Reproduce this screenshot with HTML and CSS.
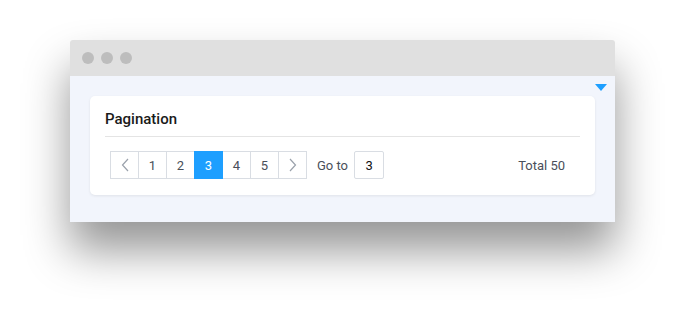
FILE: index.html
```html
<!DOCTYPE html>
<html lang="en">
<head>
  <meta charset="UTF-8">
  <meta name="viewport" content="width=device-width, initial-scale=1.0">
  <title>Pagination</title>
  <link rel="stylesheet" href="styles.css">
</head>
<body>
  <div class="window">
    <div class="titlebar">
      <span class="dot"></span>
      <span class="dot"></span>
      <span class="dot"></span>
    </div>
    <div class="content">
      <span class="toggle"></span>
      <div class="card">
        <div class="card-header">Pagination</div>
        <div class="card-body">
          <div class="pager">
            <a class="page arrow">
              <svg width="8" height="14" viewBox="0 0 8 14"><path d="M7 1L1.5 7L7 13" fill="none" stroke="currentColor" stroke-width="1.2"/></svg>
            </a>
            <a class="page">1</a>
            <a class="page">2</a>
            <a class="page active">3</a>
            <a class="page">4</a>
            <a class="page">5</a>
            <a class="page arrow">
              <svg width="8" height="14" viewBox="0 0 8 14"><path d="M1 1L6.5 7L1 13" fill="none" stroke="currentColor" stroke-width="1.2"/></svg>
            </a>
          </div>
          <span class="goto">Go to</span>
          <input class="goto-input" type="text" value="3">
          <span class="total">Total 50</span>
        </div>
      </div>
    </div>
  </div>
</body>
</html>
```

FILE: styles.css
```css
html {
  height: 100%;
}
body {
  margin: 0;
  min-height: 100%;
  overflow: hidden;
  padding: 40px 0 0 70px;
  box-sizing: border-box;
  background-color: #fff;
  font-family: Roboto, "Liberation Sans", sans-serif;
}
.window {
  width: 545px;
  box-shadow: 0 28px 45px rgba(0, 0, 0, 0.42);
  border-radius: 3px 3px 0 0;
}
.titlebar {
  height: 36px;
  background-color: #e0e0e0;
  border-radius: 3px 3px 0 0;
  display: flex;
  align-items: center;
  padding-left: 12px;
  gap: 7px;
}
.dot {
  width: 12px;
  height: 12px;
  border-radius: 50%;
  background-color: #bdbdbd;
}
.content {
  position: relative;
  background-color: #f2f5fc;
  padding: 20px 20px 27px;
}
.toggle {
  position: absolute;
  top: 8px;
  right: 8px;
  width: 0;
  height: 0;
  border-left: 6px solid transparent;
  border-right: 6px solid transparent;
  border-top: 7px solid #1e9fff;
}
.card {
  background-color: #fff;
  border-radius: 5px;
  box-shadow: 0 1px 3px rgba(0, 0, 0, 0.08);
  padding: 0 15px;
}
.card-header {
  padding: 12px 0 6px;
  line-height: 22px;
  font-size: 15px;
  font-weight: 500;
  color: #1a1a1a;
  border-bottom: 1px solid #e4e4e4;
}
.card-body {
  display: flex;
  align-items: center;
  padding: 14px 0 16px 5px;
  font-size: 13px;
  color: #4a4f5a;
}
.pager {
  display: flex;
}
.page {
  width: 27px;
  height: 26px;
  border: 1px solid #d9dde3;
  margin-left: -1px;
  display: flex;
  align-items: center;
  justify-content: center;
  color: #4a4f5a;
  background-color: #fff;
}
.page:first-child {
  margin-left: 0;
}
.page.arrow {
  color: #9aa1ab;
}
.page.active {
  background-color: #1e9fff;
  border-color: #1e9fff;
  color: #fff;
  position: relative;
}
.goto {
  margin-left: 10px;
}
.goto-input {
  margin-left: 6px;
  width: 28px;
  height: 26px;
  padding: 0;
  border: 1px solid #d9dde3;
  border-radius: 2px;
  text-align: center;
  font-family: inherit;
  font-size: 13px;
  color: #111;
}
.total {
  margin-left: auto;
  margin-right: 15px;
}
```
